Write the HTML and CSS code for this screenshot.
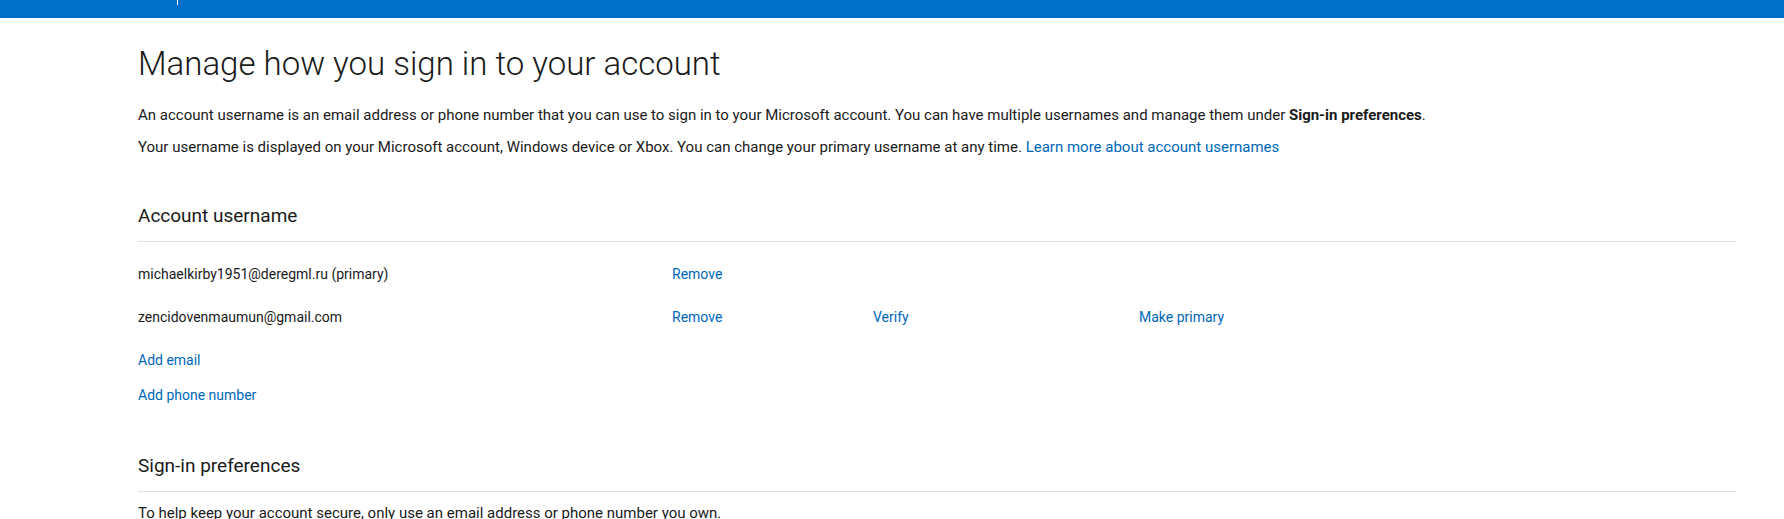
FILE: index.html
```html
<!DOCTYPE html>
<html lang="en">
<head>
  <meta charset="UTF-8">
  <meta name="viewport" content="width=device-width, initial-scale=1.0">
  <title>Manage how you sign in</title>
  <link rel="stylesheet" href="styles.css">
</head>
<body>
  <header class="topbar">
    <nav class="topnav">
      <span class="brand">Microsoft</span>
      <span class="sep"></span>
      <span>Account</span>
      <span>Your info</span>
      <span>Privacy</span>
      <span>Security</span>
      <span>Rewards</span>
      <span>Payment &amp; billing</span>
      <span>Services &amp; subscriptions</span>
    </nav>
  </header>

  <main class="page">
    <h1>Manage how you sign in to your account</h1>
    <p class="intro">An account username is an email address or phone number that you can use to sign in to your Microsoft account. You can have multiple usernames and manage them under <b>Sign-in preferences</b>.</p>
    <p class="intro">Your username is displayed on your Microsoft account, Windows device or Xbox. You can change your primary username at any time. <a href="#">Learn more about account usernames</a></p>

    <section class="section">
      <h2>Account username</h2>
      <div class="aliases">
        <div class="alias-row">
          <span>michaelkirby1951@deregml.ru (primary)</span>
          <a href="#">Remove</a>
          <span></span>
          <span></span>
        </div>
        <div class="alias-row">
          <span>zencidovenmaumun@gmail.com</span>
          <a href="#">Remove</a>
          <a href="#">Verify</a>
          <a href="#">Make primary</a>
        </div>
      </div>
      <div class="add-links">
        <a href="#">Add email</a>
        <a href="#">Add phone number</a>
      </div>
    </section>

    <section class="section">
      <h2>Sign-in preferences</h2>
      <p class="note">To help keep your account secure, only use an email address or phone number you own.</p>
    </section>
  </main>
</body>
</html>
```

FILE: styles.css
```css
body {
  margin: 0;
  font-family: Roboto, "Liberation Sans", sans-serif;
  color: #1a1a1a;
  background: #fff;
}
a {
  color: #0067b8;
  text-decoration: none;
}
.topbar {
  height: 18px;
  background: #006fc9;
  overflow: hidden;
}
.topnav {
  display: flex;
  align-items: flex-end;
  gap: 38px;
  height: 18px;
  margin-top: -17px;
  padding-left: 4px;
  color: #fff;
  font-size: 15px;
  line-height: 18px;
}
.topnav .sep {
  width: 1px;
  height: 24px;
  background: #fff;
  margin: 0 -18px -4px 70px;
}
.page {
  padding: 0 48px 0 138px;
}
h1 {
  margin: 0;
  padding: 26px 0 15px;
  font-size: 33px;
  font-weight: 300;
  line-height: 40px;
}
.intro {
  margin: 0;
  font-size: 15px;
  line-height: 32px;
}
.section {
  margin-top: 40px;
}
h2 {
  margin: 0;
  padding-bottom: 12px;
  border-bottom: 1px solid #e1e1e1;
  font-size: 19px;
  font-weight: 400;
  line-height: 26px;
}
.aliases {
  padding-top: 11px;
}
.alias-row {
  display: grid;
  grid-template-columns: 534px 201px 266px 1fr;
  font-size: 14px;
  line-height: 43px;
}
.add-links {
  display: flex;
  flex-direction: column;
  margin-top: 4px;
  font-size: 14px;
  line-height: 35px;
}
.note {
  margin: 9px 0 0;
  font-size: 15px;
  line-height: 24px;
}
```
